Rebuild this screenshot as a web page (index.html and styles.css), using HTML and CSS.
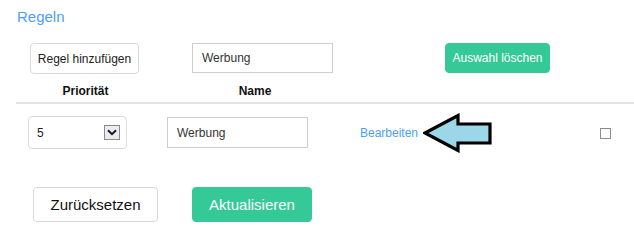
FILE: index.html
```html
<!DOCTYPE html>
<html lang="de">
<head>
<meta charset="utf-8">
<title>Regeln</title>
<link rel="stylesheet" href="styles.css">
</head>
<body>
<div class="page">
  <h2 class="title">Regeln</h2>
  <div class="toolbar">
    <button class="btn btn-light btn-add">Regel hinzufügen</button>
    <div class="field field-top">Werbung</div>
    <button class="btn btn-green btn-clear">Auswahl löschen</button>
  </div>
  <div class="head-row">
    <div class="th th-prio">Priorität</div>
    <div class="th th-name">Name</div>
  </div>
  <div class="rule-row">
    <div class="select">
      <span class="select-val">5</span>
      <span class="select-btn">
        <svg width="10" height="7" viewBox="0 0 10 7"><path d="M1 1.2 L5 5.2 L9 1.2" fill="none" stroke="#111a33" stroke-width="2"/></svg>
      </span>
    </div>
    <div class="field field-row">Werbung</div>
    <a class="edit-link">Bearbeiten</a>
    <svg class="arrow" width="70" height="40" viewBox="0 0 70 40">
      <polygon points="2,20 35,2.5 35,11 67,11 67,30 35,30 35,37.5" fill="#9bd7e9" stroke="#000" stroke-width="3.2" stroke-linejoin="miter"/>
    </svg>
    <span class="check"></span>
  </div>
  <div class="actions">
    <button class="btn btn-light btn-reset">Zurücksetzen</button>
    <button class="btn btn-green btn-update">Aktualisieren</button>
  </div>
</div>
</body>
</html>
```

FILE: styles.css
```css
* { box-sizing: border-box; }
html, body { margin: 0; padding: 0; background: #fff; }
body {
  font-family: "Liberation Sans", Arial, sans-serif;
  color: #222;
  width: 634px;
  height: 236px;
  overflow: hidden;
}
.page { padding-left: 16px; padding-top: 8px; }
.title {
  margin: 0 0 0 1px;
  font-size: 15px;
  line-height: 18px;
  font-weight: normal;
  color: #4ba1f7;
}
.toolbar {
  display: flex;
  align-items: flex-start;
  margin-top: 17px;
  height: 31px;
}
.btn {
  font-family: "Liberation Sans", Arial, sans-serif;
  border-radius: 4px;
  padding: 0;
  cursor: pointer;
}
.btn-light {
  background: #fff;
  border: 1px solid #d9d9d9;
  color: #222;
}
.btn-green {
  background: #34c997;
  border: 1px solid #34c997;
  color: #fff;
}
.btn-add {
  margin-left: 14px;
  width: 109px;
  height: 31px;
  font-size: 12px;
}
.field {
  border: 1px solid #cfcfcf;
  background: #fff;
  font-size: 12px;
  color: #333;
  padding-left: 9px;
  display: flex;
  align-items: center;
}
.field-top {
  margin-left: 53px;
  width: 141px;
  height: 30px;
}
.btn-clear {
  margin-left: 112px;
  width: 105px;
  height: 30px;
  font-size: 12px;
}
.head-row {
  display: flex;
  margin-top: 10px;
  padding-bottom: 4px;
  border-bottom: 2px solid #e4e4e4;
}
.th {
  font-size: 12px;
  line-height: 14px;
  font-weight: bold;
  color: #111;
  text-align: center;
}
.th-prio { margin-left: 14px; width: 111px; }
.th-name { width: 228px; }
.rule-row {
  display: flex;
  align-items: center;
  margin-top: 12px;
  height: 33px;
}
.select {
  margin-left: 12px;
  width: 99px;
  height: 33px;
  border: 1px solid #dcdcdc;
  border-radius: 4px;
  display: flex;
  align-items: center;
  font-size: 12px;
  color: #222;
}
.select-val { margin-left: 8px; flex: 1; }
.select-btn {
  width: 16px;
  height: 15px;
  margin-right: 6px;
  border: 1px solid #8a8a8a;
  background: #ececec;
  display: flex;
  align-items: center;
  justify-content: center;
}
.field-row {
  margin-left: 40px;
  width: 141px;
  height: 31px;
}
.edit-link {
  margin-left: 52px;
  font-size: 12px;
  color: #4ba1f7;
  cursor: pointer;
}
.arrow { margin-left: 5px; margin-top: 1px; }
.check {
  margin-left: 107px;
  width: 11px;
  height: 11px;
  border: 1px solid #8c8c8c;
  background: #fff;
  margin-top: 1px;
}
.actions {
  display: flex;
  margin-top: 38px;
}
.btn-reset {
  margin-left: 17px;
  width: 125px;
  height: 35px;
  font-size: 15px;
  color: #111;
}
.btn-update {
  margin-left: 34px;
  width: 120px;
  height: 35px;
  font-size: 15px;
}
```
